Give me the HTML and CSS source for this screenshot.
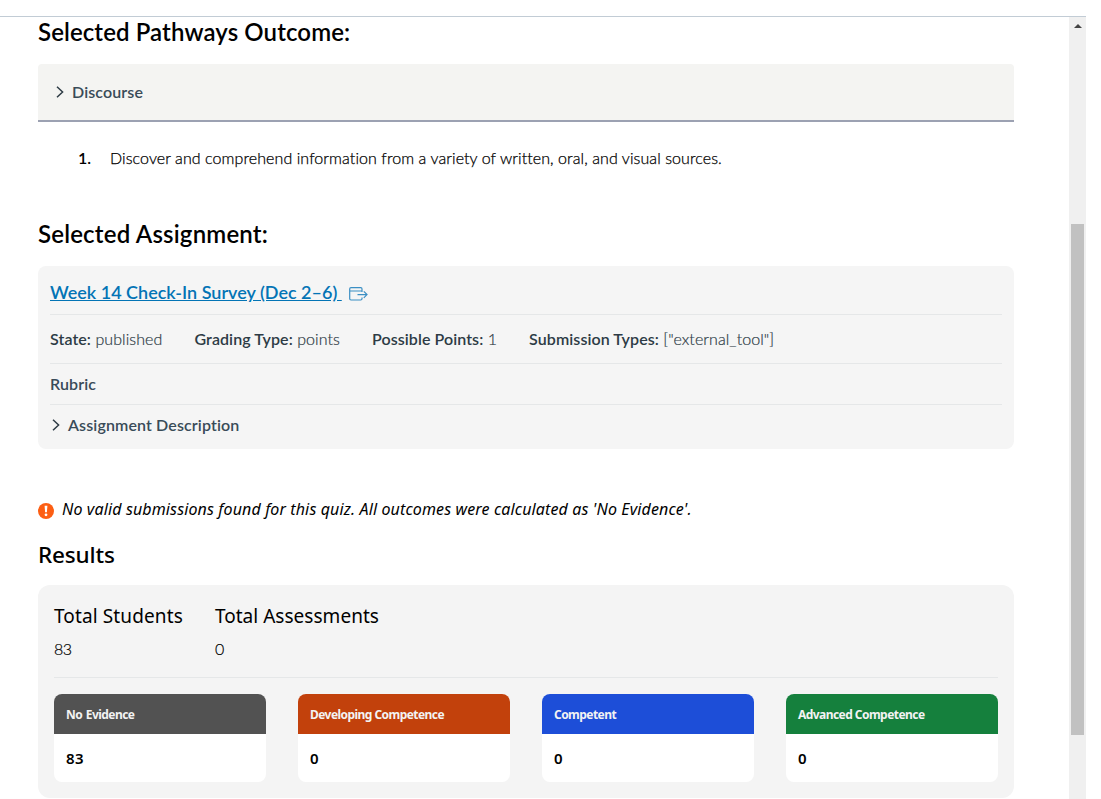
FILE: index.html
```
<!DOCTYPE html>
<html lang="en">
<head>
<meta charset="utf-8">
<title>Pathways Outcome</title>
<link rel="stylesheet" href="styles.css">
</head>
<body>
<div class="frame">
  <main class="content">
    <h2 class="heading first">Selected Pathways Outcome:</h2>
    <section class="outcome">
      <svg class="chevron" viewBox="0 0 8 12"><path d="M1 .7 6.6 6 1 11.3"/></svg>
      <span class="label">Discourse</span>
    </section>
    <div class="objective"><b>1.</b><span>Discover and comprehend information from a variety of written, oral, and visual sources.</span></div>
    <h2 class="heading second">Selected Assignment:</h2>
    <section class="assignment">
      <div class="row title">
        <a class="link" href="#">Week 14 Check-In Survey (Dec 2–6)&nbsp;</a>
        <svg class="external" viewBox="0 0 19 14"><path d="M13 5V2Q13 .7 11.7.7H2Q.7.7.7 2v9.8Q.7 13 2 13h9.7q1.3 0 1.3-1.2V10.5M.7 4H13M8.5 7.6H18M14.8 4.4 18 7.6l-3.2 3.2"/></svg>
      </div>
      <div class="row facts">
        <span><b>State:</b> published</span>
        <span><b>Grading Type:</b> points</span>
        <span><b>Possible Points:</b> 1</span>
        <span><b>Submission Types:</b> ["external_tool"]</span>
      </div>
      <div class="row rubric"><span class="label">Rubric</span></div>
      <div class="row description">
        <svg class="chevron" viewBox="0 0 8 12"><path d="M1 .7 6.6 6 1 11.3"/></svg>
        <span class="label">Assignment Description</span>
      </div>
    </section>
    <div class="notice">
      <svg class="alert" viewBox="0 0 16 16"><circle cx="8" cy="8" r="8" fill="#fc5e13"/><path d="M6.6 2.8h2.8l-.5 6.5H7.1z" fill="#fff"/><circle cx="8" cy="11.8" r="1.4" fill="#fff"/></svg>
      <em class="notice-text">No valid submissions found for this quiz. All outcomes were calculated as 'No Evidence'.</em>
    </div>
    <h2 class="results-heading">Results</h2>
    <section class="results">
      <div class="totals">
        <div class="total"><h3>Total Students</h3><p>83</p></div>
        <div class="total"><h3>Total Assessments</h3><p>0</p></div>
      </div>
      <div class="cards">
        <article class="card"><header class="none">No Evidence</header><strong>83</strong></article>
        <article class="card"><header class="developing">Developing Competence</header><strong>0</strong></article>
        <article class="card"><header class="competent">Competent</header><strong>0</strong></article>
        <article class="card"><header class="advanced">Advanced Competence</header><strong>0</strong></article>
      </div>
    </section>
  </main>
  <aside class="scrollbar"><i class="arrow"></i><i class="thumb"></i></aside>
</div>
</body>
</html>
```
FILE: styles.css
```
* { box-sizing: border-box; }
body { margin: 0; background: #fff; height: 799px; overflow: hidden; font-family: Lato, sans-serif; font-size: 16px; color: #000; font-variant-ligatures: none; }
h2, h3, p { margin: 0; }
svg { display: block; flex: none; fill: none; }
.frame { width: 1086px; height: 783px; margin-top: 16px; border-top: 1px solid #c2ccd5; display: flex; justify-content: space-between; overflow: hidden; }
.content { width: 1014px; padding-left: 38px; }
.heading { height: 32px; font-size: 24px; font-weight: 600; letter-spacing: .1px; white-space: nowrap; }
.first { line-height: 30px; }
.outcome { height: 58px; margin-top: 15px; background: #f4f4f2; border-bottom: 2px solid #9ca1b2; border-radius: 4px 4px 0 0; display: flex; align-items: center; padding-left: 18px; gap: 8px; }
.chevron { width: 8px; height: 12px; stroke: #2d3b45; stroke-width: 1.5; }
.label { font-weight: 600; color: #394b58; line-height: 24px; font-size: 16px; letter-spacing: .12px; white-space: nowrap; }
.objective { height: 24px; line-height: 24px; margin-top: 24px; padding-left: 40px; display: flex; white-space: nowrap; font-weight: 300; letter-spacing: .085px; -webkit-text-stroke: .25px; }
.objective b { width: 32px; font-weight: 600; -webkit-text-stroke: 0; }
.second { margin-top: 48px; line-height: 32px; letter-spacing: .19px; }
.assignment { height: 183px; margin-top: 16px; padding: 0 12px; border-radius: 8px; background: #f5f5f5; }
.row { display: flex; align-items: center; border-bottom: 1px solid #e5e7e8; white-space: nowrap; }
.title { height: 49px; gap: 7px; padding-top: 4px; }
.link { color: #0374b5; font-size: 18px; line-height: 24px; font-weight: 600; text-decoration: underline; }
.external { width: 19px; height: 14px; margin-top: 3px; stroke: #3b8fc4; stroke-width: 1.2; }
.facts { height: 49px; gap: 32px; color: #2d3b45; font-weight: 300; padding-bottom: 2px; letter-spacing: .08px; -webkit-text-stroke: .2px; }
.facts b { font-weight: 600; -webkit-text-stroke: 0; }
.rubric { height: 41px; }
.description { height: 41px; gap: 8px; padding: 0 0 1px 2px; border: 0; }
.notice { height: 24px; margin-top: 49px; display: flex; align-items: center; gap: 8px; white-space: nowrap; }
.alert { width: 16px; height: 16px; margin-top: 2px; }
.notice-text { font: italic 400 16px/22px "Noto Sans", sans-serif; letter-spacing: .13px; margin-top: -2px; }
.results-heading { margin-top: 17px; height: 32px; font: 500 22.5px/32px "Noto Sans", sans-serif; letter-spacing: -.15px; }
.results { height: 213px; margin-top: 14px; padding: 16px; border-radius: 12px; background: #f4f4f4; }
.totals { height: 77px; display: flex; gap: 32px; border-bottom: 1px solid #e5e7e8; }
.total h3 { height: 30px; font: 400 19px/30px "Noto Sans", sans-serif; letter-spacing: .12px; white-space: nowrap; }
.total + .total h3 { letter-spacing: .03px; }
.total p { margin-top: 6px; font-weight: 300; line-height: 24px; font-size: 16px; letter-spacing: -.5px; -webkit-text-stroke: .2px; }
.cards { display: grid; grid-template-columns: repeat(4, 1fr); gap: 32px; margin-top: 16px; }
.card { height: 88px; background: #fff; border-radius: 8px; overflow: hidden; font-family: "Noto Sans", sans-serif; }
.card header { height: 40px; padding-left: 12px; color: #f3f3f3; font-size: 12px; font-weight: 700; letter-spacing: -.55px; line-height: 41px; white-space: nowrap; }
.card strong { display: block; padding: 12px; font-size: 15px; line-height: 24px; font-weight: 600; letter-spacing: .4px; }
.card .none { background: #525252; word-spacing: 1px; }
.developing { background: #c2410c; }
.competent { background: #1d4ed8; }
.advanced { background: #15803d; }
.scrollbar { width: 17px; background: #f0f0f0; padding: 7px 2px 0; }
.arrow { display: block; width: 0; margin: 0 auto; border: 4px solid transparent; border-top: 0; border-bottom: 4px solid #444; }
.thumb { display: block; height: 511px; margin-top: 196px; background: #c1c1c1; }
```
